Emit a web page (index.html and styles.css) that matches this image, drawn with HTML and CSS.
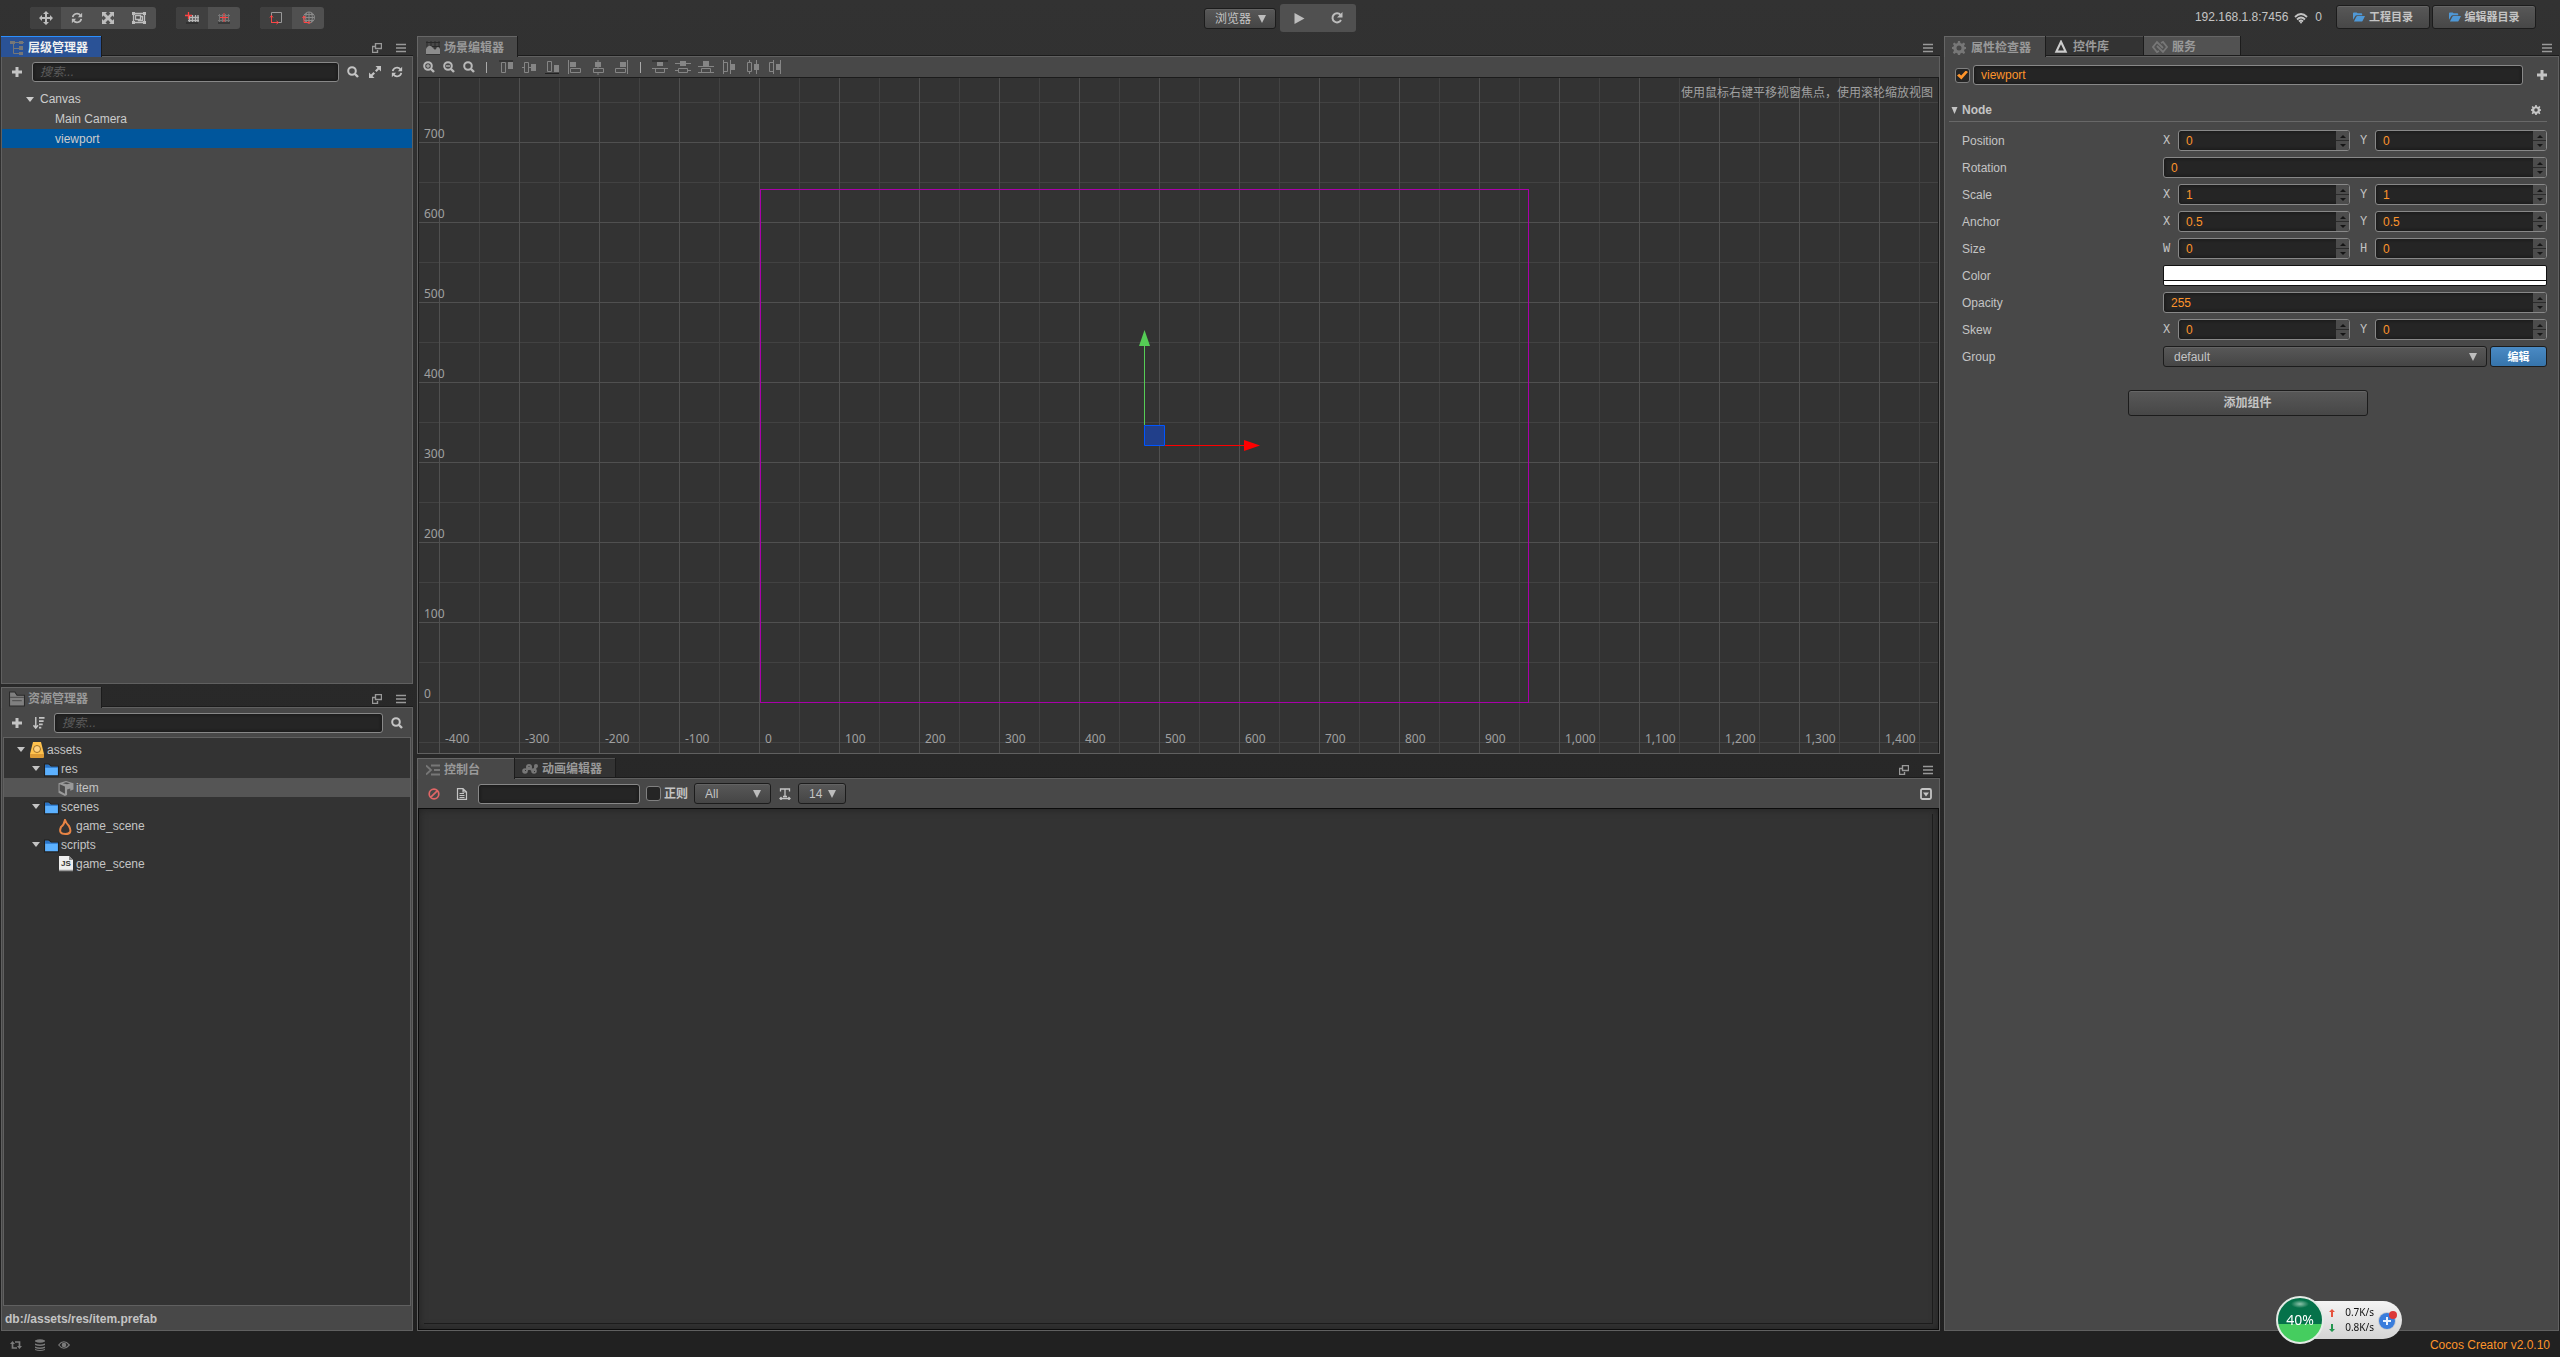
FILE: index.html
```html
<!DOCTYPE html>
<html lang="zh-CN">
<head>
<meta charset="utf-8">
<title>Cocos Creator</title>
<link rel="stylesheet" href="styles.css">
</head>
<body>
<svg class="defs" aria-hidden="true">
  <symbol id="move" viewBox="0 0 14 14"><path d="M7 0l3 3H8v3h3V4l3 3-3 3V8H8v3h2l-3 3-3-3h2V8H3v2L0 7l3-3v2h3V3H4z"/></symbol>
  <symbol id="refresh" viewBox="0 0 14 14"><path d="M2 6a5 5 0 0 1 9-2M12 8a5 5 0 0 1-9 2" fill="none" stroke="currentColor" stroke-width="2"/><path d="M13 1v5H8zM1 13V8h5z"/></symbol>
  <symbol id="scale" viewBox="0 0 14 14"><path d="M1 1h5L4.500 2.500 7 5l2.500-2.500L8 1h5v5l-1.500-1.500L9 7l2.500 2.500L13 8v5H8l1.500-1.500L7 9l-2.500 2.500L6 13H1V8l1.500 1.500L5 7 2.500 4.500 1 6z"/></symbol>
  <symbol id="rect" viewBox="0 0 16 14"><path d="M2.500 2.500h11v9h-11zM4.500 4.500h5v4h-5zM7.500 8.500v1h4v-4h-2" fill="none" stroke="currentColor" stroke-width="1.300"/><path d="M1 1h3v3H1zM12 1h3v3h-3zM1 10h3v3H1zM12 10h3v3h-3z"/></symbol>
  <symbol id="pivot" viewBox="0 0 14 12"><path d="M3 8.500h11M3 5.500h11M4.500 4v6M7.500 3v7M10.500 3v7M13 3v7" fill="none" stroke="#b5b5b5" stroke-width="1.300"/><path d="M1 11h12" stroke="#222"/><path d="M3.500 0v7M0 3.500h7" stroke="#f44" stroke-width="1.300"/></symbol>
  <symbol id="center" viewBox="0 0 14 12"><path d="M1 3.500h12M1 8.500h12M2.500 2v8M5.500 2v8M8.500 2v8M11.500 2v8" fill="none" stroke="#777"/><path d="M1 11h12" stroke="#222"/><path d="M7 1v9M3 5.500h8" stroke="#f44"/></symbol>
  <symbol id="local" viewBox="0 0 14 14"><path d="M2.500 1.500h10v10h-10z" fill="none" stroke="#999"/><path d="M2.500 5v6.500h6M1 6.500l1.500-2 1.500 2M7.500 10l2 1.500-2 1.500" fill="none" stroke="#f44"/></symbol>
  <symbol id="world" viewBox="0 0 14 14"><path d="M8 1a5.500 5.500 0 1 1 0 11A5.500 5.500 0 1 1 8 1zM8 1v11M2.500 6.500h11M3.500 3.500h9M3.500 9.500h9M5.500 2q-2 4.500 0 9M10.500 2q2 4.500 0 9" fill="none" stroke="#8a8a8a"/><path d="M3 5v6.500h5M1.500 7L3 5l1.500 2M7.500 10l1.500 1.500L7.500 13" fill="none" stroke="#f44"/></symbol>
  <symbol id="play" viewBox="0 0 10 11"><path d="M0 0l10 5.500L0 11z"/></symbol>
  <symbol id="reload" viewBox="0 0 12 12"><path d="M9.500 3A4.500 4.500 0 1 0 10 8" fill="none" stroke="currentColor" stroke-width="2"/><path d="M11.500 0v5.500H6z"/></symbol>
  <symbol id="wifi" viewBox="0 0 14 11"><path d="M1 4.500q6-6 12 0M3 7q4-4 8 0M5 9q2-2 4 0" fill="none" stroke="currentColor" stroke-width="1.800"/><circle cx="7" cy="10" r="1"/></symbol>
  <symbol id="openfolder" viewBox="0 0 13 10"><path d="M0 8V1q0-1 1-1h3l1 1h4q1 0 1 1v1H4q-1 0-1.500 1zM1 10l2.500-5q.3-1 1.500-1h8l-2.500 5q-.4 1-1.500 1z"/></symbol>
  <symbol id="tree" viewBox="0 0 14 14"><path d="M3.500 3v9.500H10M3.500 7.500H10M0 1.500h14" fill="none" stroke="currentColor"/><path d="M0 0h5v3H0zM9 0h4v3H9zM9 5h4v4H9zM9 11h4v3H9z"/></symbol>
  <symbol id="popout" viewBox="0 0 10 10"><path d="M3.500.5h6v5h-6zM3 3.500H.5v6h5V7" fill="none" stroke="currentColor" stroke-width="1.400"/></symbol>
  <symbol id="menu" viewBox="0 0 10 8"><path d="M0 .5h10M0 4h10M0 7.500h10" stroke="currentColor" stroke-width="1.300"/></symbol>
  <symbol id="plus" viewBox="0 0 10 10"><path d="M3.500 0h3v3.500H10v3H6.500V10h-3V6.500H0v-3h3.500z"/></symbol>
  <symbol id="search" viewBox="0 0 12 12"><circle cx="5" cy="5" r="3.800" fill="none" stroke="currentColor" stroke-width="2"/><path d="M8 8l3 3" stroke="currentColor" stroke-width="2.400"/></symbol>
  <symbol id="zoomin" viewBox="0 0 12 12"><use href="#search"/><path d="M3 5h4M5 3v4" stroke="currentColor"/></symbol>
  <symbol id="zoomout" viewBox="0 0 12 12"><use href="#search"/><path d="M3 5h4" stroke="currentColor" stroke-width="1.300"/></symbol>
  <symbol id="expand" viewBox="0 0 12 12"><path d="M6.500 0H12v5.500L10 3.500 7.500 6 6 4.500 8.500 2zM5.500 12H0V6.500l2 2L4.500 6 6 7.500 3.500 10z"/></symbol>
  <symbol id="sort" viewBox="0 0 12 13"><path d="M2.500 0v11M0 9l2.500 3L5 9" fill="none" stroke="currentColor" stroke-width="1.600"/><path d="M6 0h6v2H6zM6 3.500h5v2H6zM6 7h4v2H6zM6 10.500h2.500v2H6z"/></symbol>
  <symbol id="scene" viewBox="0 0 14 14"><path d="M1 0v6M5 0v6M9 0v8M13 0v10M0 1.500h14M6 5.500h8" stroke="#2a2a2a"/><path d="M0 14V8q3-6 7-1 2 3 3 1 2-4 4 0v6z" fill="#8c8c8c"/><path d="M0 13.500h14" stroke="#333"/></symbol>
  <symbol id="folder" viewBox="0 0 15 14"><path d="M.5 13.500V.500h5l2 3h7v10z" fill="#808080" stroke="#2a2a2a"/><path d="M1 5.500h13M3 8.500h9" stroke="#555"/></symbol>
  <symbol id="gear" viewBox="0 0 14 14"><path d="M6 0h2l.4 2 1.600.7L11.800 1.500l1.400 1.400L12 4.600l.6 1.400L14 6v2l-1.400.3-.6 1.500 1.200 1.700-1.400 1.400-1.800-1.200-1.600.7L8 14H6l-.4-1.600-1.600-.7-1.800 1.200L.8 11.500 2 9.800l-.6-1.500L0 8V6l1.400-.3L2 4.200.8 2.900l1.400-1.400L4 2.700 5.600 2zM7 4.500a2.500 2.500 0 1 0 0 5 2.500 2.500 0 1 0 0-5z" fill-rule="evenodd"/></symbol>
  <symbol id="widget" viewBox="0 0 12 12"><path d="M6 1.500L10 10H2z" fill="none" stroke="currentColor" stroke-width="1.800"/></symbol>
  <symbol id="service" viewBox="0 0 16 14"><path d="M7 11l-2 1-4-5 4-5 6 6M9 3l2-1 4 5-4 5-6-6" fill="none" stroke="currentColor" stroke-width="1.800"/></symbol>
  <symbol id="console" viewBox="0 0 14 11"><path d="M0 1l5 4.500L0 10M5 1h9M8 5.500h6M5 10h9" fill="none" stroke="currentColor" stroke-width="1.800"/></symbol>
  <symbol id="anim" viewBox="0 0 16 12"><path d="M3 8l4-3 5 3 2-5" fill="none" stroke="currentColor" stroke-width="2.500"/><circle cx="3" cy="8" r="2.800"/><circle cx="7" cy="4" r="3"/><circle cx="12" cy="8" r="2.800"/><circle cx="14" cy="3" r="2"/><path d="M3 7h1v1H3zM6.500 3h1v1h-1zM12 8h1v1h-1z" fill="#333"/></symbol>
  <symbol id="ban" viewBox="0 0 12 12"><path d="M6 1.200a4.800 4.800 0 1 0 0 9.600 4.800 4.800 0 1 0 0-9.600zM2.800 9.200l6.400-6.400" fill="none" stroke="currentColor" stroke-width="1.700"/></symbol>
  <symbol id="doc" viewBox="0 0 12 12"><path d="M1.500.7H7L10.500 4v7.300h-9zM7 1v3h3.500M3.500 5.500H8M3.500 7.500h5M3.500 9.500h5" fill="none" stroke="currentColor" stroke-width="1.200"/></symbol>
  <symbol id="fontsize" viewBox="0 0 12 12"><path d="M1.500 3.500V1h9v2.500M6 1v7.500M4 8.500h4M1 10.500h10M2.500 9L1 10.500 2.500 12M9.500 9l1.500 1.500L9.500 12" fill="none" stroke="currentColor" stroke-width="1.300"/></symbol>
  <symbol id="collapse" viewBox="0 0 12 12"><rect x="1" y="1" width="10" height="10" rx="1.500" fill="none" stroke="currentColor" stroke-width="1.800"/><path d="M3 4.500h6L6 8.500z"/></symbol>
  <symbol id="al1" viewBox="0 0 16 16"><path d="M1 2h14" stroke="#222"/><path d="M3.500 3.500h4v10h-4z" fill="none" stroke="currentColor"/><path d="M10 3h5v7h-5z"/></symbol>
  <symbol id="al2" viewBox="0 0 16 16"><path d="M1 8.500h14" stroke="currentColor"/><path d="M3.500 3.500h4v10h-4z" fill="#484848" stroke="currentColor"/><path d="M10 5h5v7h-5z"/></symbol>
  <symbol id="al3" viewBox="0 0 16 16"><path d="M1 14.500h14" stroke="#222"/><path d="M3.500 2.500h4v10h-4z" fill="none" stroke="currentColor"/><path d="M10 6h5v7h-5z"/></symbol>
  <symbol id="al4" viewBox="0 0 16 16"><path d="M1.500 1v14" stroke="currentColor"/><path d="M3 3h6v5H3z"/><path d="M3.500 9.500h10v4h-10z" fill="none" stroke="currentColor"/></symbol>
  <symbol id="al5" viewBox="0 0 16 16"><path d="M8 1v15" stroke="currentColor"/><path d="M5 3h6v5H5z"/><path d="M3.500 9.500h10v4h-10z" fill="#484848" stroke="currentColor"/></symbol>
  <symbol id="al6" viewBox="0 0 16 16"><path d="M14.500 1v14" stroke="currentColor"/><path d="M7 3h6v5H7z"/><path d="M2.500 9.500h10v4h-10z" fill="none" stroke="currentColor"/></symbol>
  <symbol id="di1" viewBox="0 0 16 16"><path d="M0 2h16" stroke="#222"/><path d="M0 9.500h16" stroke="currentColor"/><path d="M5 3h6v4H5z"/><path d="M3.500 9.500h9v4h-9z" fill="none" stroke="currentColor"/></symbol>
  <symbol id="di2" viewBox="0 0 16 16"><path d="M0 4.500h16M0 11.500h16" stroke="currentColor"/><path d="M5 2h6v5H5z"/><path d="M3.500 9.500h9v4h-9z" fill="#484848" stroke="currentColor"/></symbol>
  <symbol id="di3" viewBox="0 0 16 16"><path d="M0 7.500h16M0 13.500h16" stroke="currentColor"/><path d="M5 2h6v5H5z"/><path d="M3.500 9.500h9v4h-9z" fill="none" stroke="currentColor"/></symbol>
  <symbol id="di4" viewBox="0 0 16 16"><path d="M2.500 1v14M9.500 1v14" stroke="currentColor"/><path d="M2.500 3.500h4v9h-4z" fill="none" stroke="currentColor"/><path d="M10 5h4v6h-4z"/></symbol>
  <symbol id="di5" viewBox="0 0 16 16"><path d="M5.500 1v14M12.500 1v14" stroke="currentColor"/><path d="M3.500 3.500h4v9h-4z" fill="#484848" stroke="currentColor"/><path d="M10 5h5v6h-5z"/></symbol>
  <symbol id="di6" viewBox="0 0 16 16"><path d="M6.500 1v14M13.500 1v14" stroke="currentColor"/><path d="M2.500 3.500h4v9h-4z" fill="none" stroke="currentColor"/><path d="M9 5h4v6H9z"/></symbol>
  <symbol id="arrow" viewBox="0 0 8 5"><path d="M0 0h8L4 5z"/></symbol>
  <symbol id="node-arrow" viewBox="0 0 6 7"><path d="M0 0h6L3 7z"/></symbol>
  <symbol id="assets" viewBox="0 0 14 16"><path d="M3 0h8l3 12H0z" fill="#ffc24d"/><path d="M0 12h14v3q0 1-1 1H1q-1 0-1-1z" fill="#dd9b35"/><circle cx="7" cy="7" r="3.500" fill="#ffd280" stroke="#9e7027"/></symbol>
  <symbol id="bluefolder" viewBox="0 0 14 12"><path d="M.5 11.500V.500h4l2 2h7v9z" fill="#5cb1ff" stroke="#202020"/><path d="M1 1h3l2 2h7v1H1z" fill="#2873c7"/></symbol>
  <symbol id="prefab" viewBox="0 0 14 15"><path d="M0 3l7-2 7 2v6l-3 1V8L8 9v5l-2 1-6-3z" fill="#999"/><path d="M1 4l5 2v7l-5-3zM4 3l3-1 4 1-3 1z" fill="#4c4c4c"/></symbol>
  <symbol id="fire" viewBox="0 0 14 16"><path d="M6 1Q7 4 10 7q4 8-3.500 8T2 8q3-2 4-7z" fill="none" stroke="#e78445" stroke-width="2"/></symbol>
  <symbol id="jsfile" viewBox="0 0 14 16"><path d="M0 0h10l4 4v11H0z" fill="#eee"/><path d="M10 0l4 4h-4z" fill="#888"/><path d="M0 14.500h14" stroke="#999" stroke-width="1.500"/></symbol>
  <symbol id="loop" viewBox="0 0 12 10"><path d="M2.500 3v5H7M9.500 7V2H5" fill="none" stroke="currentColor" stroke-width="1.700"/><path d="M0 4l2.500-3L5 4zM7 6h5L9.500 9z"/></symbol>
  <symbol id="db" viewBox="0 0 10 12"><path d="M0 1.500Q5-1 10 1.500v1Q5 5 0 2.500zM0 4.500q5 2 10 0v1.500q-5 2-10 0zM0 7.500q5 2 10 0V9q-5 2-10 0zM0 10q5 2 10 0v1q-5 2-10 0z"/></symbol>
  <symbol id="eye" viewBox="0 0 12 8"><path d="M.7 4q5-6.500 10.600 0-5.600 6.500-10.600 0z" fill="none" stroke="currentColor" stroke-width="1.200"/><circle cx="6" cy="4" r="2.300"/></symbol>
</svg>

<header class="topbar">
  <div class="topbar-left">
    <div class="group modes">
      <button class="tool on" aria-label="Move"><svg class="i14"><use href="#move"/></svg></button>
      <button class="tool" aria-label="Rotate"><svg class="i12"><use href="#refresh"/></svg></button>
      <button class="tool" aria-label="Scale"><svg class="i14"><use href="#scale"/></svg></button>
      <button class="tool" aria-label="Rect"><svg class="i16"><use href="#rect"/></svg></button>
    </div>
    <div class="group">
      <button class="tool on" aria-label="Pivot"><svg class="i14"><use href="#pivot"/></svg></button>
      <button class="tool" aria-label="Center"><svg class="i14"><use href="#center"/></svg></button>
    </div>
    <div class="group">
      <button class="tool on" aria-label="Local"><svg class="i14"><use href="#local"/></svg></button>
      <button class="tool" aria-label="World"><svg class="i14"><use href="#world"/></svg></button>
    </div>
  </div>
  <div class="topbar-mid">
    <div class="select browser"><select aria-label="预览平台"><option>浏览器</option></select></div>
    <div class="group run">
      <button class="tool" aria-label="Play"><svg class="i11"><use href="#play"/></svg></button>
      <button class="tool" aria-label="Reload"><svg class="i12"><use href="#reload"/></svg></button>
    </div>
  </div>
  <div class="topbar-right">
    <span class="ip">192.168.1.8:7456</span><svg class="i14 wifi"><use href="#wifi"/></svg><span class="count">0</span>
    <button class="btn dir"><svg class="i12"><use href="#openfolder"/></svg>工程目录</button>
    <button class="btn dir wide"><svg class="i12"><use href="#openfolder"/></svg>编辑器目录</button>
  </div>
</header>

<main class="workspace">
  <div class="column left">
    <section class="panel">
      <div class="tabs">
        <a href="#" class="tab active focused"><svg class="i14"><use href="#tree"/></svg>层级管理器</a>
        <div class="tab-tools"><svg class="i10"><use href="#popout"/></svg><svg class="i10"><use href="#menu"/></svg></div>
      </div>
      <div class="body">
        <div class="bar">
          <button class="icon" aria-label="新建"><svg class="i10"><use href="#plus"/></svg></button>
          <input class="field" type="text" placeholder="搜索..." aria-label="搜索节点">
          <button class="icon" aria-label="搜索"><svg class="i12"><use href="#search"/></svg></button>
          <button class="icon" aria-label="展开"><svg class="i12"><use href="#expand"/></svg></button>
          <button class="icon" aria-label="刷新"><svg class="i12"><use href="#refresh"/></svg></button>
        </div>
        <ul class="nodes">
          <li class="n1"><svg class="caret"><use href="#arrow"/></svg>Canvas</li>
          <li class="n2">Main Camera</li>
          <li class="n2 selected">viewport</li>
        </ul>
      </div>
    </section>
    <section class="panel">
      <div class="tabs">
        <a href="#" class="tab active folder"><svg class="i16"><use href="#folder"/></svg>资源管理器</a>
        <div class="tab-tools"><svg class="i10"><use href="#popout"/></svg><svg class="i10"><use href="#menu"/></svg></div>
      </div>
      <div class="body">
        <div class="bar">
          <button class="icon" aria-label="新建"><svg class="i10"><use href="#plus"/></svg></button>
          <button class="icon" aria-label="排序"><svg class="i12"><use href="#sort"/></svg></button>
          <input class="field" type="text" placeholder="搜索..." aria-label="搜索资源">
          <button class="icon" aria-label="搜索"><svg class="i12"><use href="#search"/></svg></button>
        </div>
        <ul class="files">
          <li class="d0"><svg class="caret"><use href="#arrow"/></svg><svg class="i16"><use href="#assets"/></svg>assets</li>
          <li class="d1"><svg class="caret"><use href="#arrow"/></svg><svg class="i14 low"><use href="#bluefolder"/></svg>res</li>
          <li class="d2 picked"><svg class="i16"><use href="#prefab"/></svg>item</li>
          <li class="d1"><svg class="caret"><use href="#arrow"/></svg><svg class="i14 low"><use href="#bluefolder"/></svg>scenes</li>
          <li class="d2"><svg class="i16 low"><use href="#fire"/></svg>game_scene</li>
          <li class="d1"><svg class="caret"><use href="#arrow"/></svg><svg class="i14 low"><use href="#bluefolder"/></svg>scripts</li>
          <li class="d2"><span class="js"><svg class="i16"><use href="#jsfile"/></svg><b>JS</b></span>game_scene</li>
        </ul>
        <div class="path">db://assets/res/item.prefab</div>
      </div>
    </section>
  </div>

  <div class="column middle">
    <section class="panel">
      <div class="tabs">
        <a href="#" class="tab active"><svg class="i14"><use href="#scene"/></svg>场景编辑器</a>
        <div class="tab-tools"><svg class="i10"><use href="#menu"/></svg></div>
      </div>
      <div class="body">
        <div class="scene-bar">
          <button class="icon zoom" aria-label="放大"><svg class="i12"><use href="#zoomin"/></svg></button>
          <button class="icon zoom" aria-label="缩小"><svg class="i12"><use href="#zoomout"/></svg></button>
          <button class="icon zoom" aria-label="重置"><svg class="i12"><use href="#search"/></svg></button>
          <i class="sep"></i>
          <svg class="i16"><use href="#al1"/></svg><svg class="i16"><use href="#al2"/></svg><svg class="i16"><use href="#al3"/></svg><svg class="i16"><use href="#al4"/></svg><svg class="i16"><use href="#al5"/></svg><svg class="i16"><use href="#al6"/></svg>
          <i class="sep"></i>
          <svg class="i16"><use href="#di1"/></svg><svg class="i16"><use href="#di2"/></svg><svg class="i16"><use href="#di3"/></svg><svg class="i16"><use href="#di4"/></svg><svg class="i16"><use href="#di5"/></svg><svg class="i16"><use href="#di6"/></svg>
        </div>
        <div class="scene">
          <p class="hint">使用鼠标右键平移视窗焦点，使用滚轮缩放视图</p>
          <div class="axis-y"><span>700</span><span>600</span><span>500</span><span>400</span><span>300</span><span>200</span><span>100</span><span>0</span></div>
          <div class="axis-x"><span>-400</span><span>-300</span><span>-200</span><span>-100</span><span>0</span><span>100</span><span>200</span><span>300</span><span>400</span><span>500</span><span>600</span><span>700</span><span>800</span><span>900</span><span>1,000</span><span>1,100</span><span>1,200</span><span>1,300</span><span>1,400</span></div>
          <div class="design">
            <svg class="gizmo" viewBox="0 0 124 120">
              <path d="M5.500 16v79" stroke="#55cc55"/><path d="M5.500 0l5.500 16H0z" fill="#55cc55"/>
              <path d="M26 115.500h79" stroke="#f00"/><path d="M121 115.500l-16-5.500v11z" fill="#f00"/>
              <path d="M5.500 95.500h20v20h-20z" fill="#213f8a" stroke="#0055ff"/>
            </svg>
          </div>
        </div>
      </div>
    </section>
    <section class="panel">
      <div class="tabs">
        <a href="#" class="tab active console"><svg class="i14"><use href="#console"/></svg>控制台</a>
        <a href="#" class="tab idle anim"><svg class="i16"><use href="#anim"/></svg>动画编辑器</a>
        <div class="tab-tools"><svg class="i10"><use href="#popout"/></svg><svg class="i10"><use href="#menu"/></svg></div>
      </div>
      <div class="body">
        <div class="log-bar">
          <button class="icon red" aria-label="清除"><svg class="i12"><use href="#ban"/></svg></button>
          <button class="icon" aria-label="日志"><svg class="i12"><use href="#doc"/></svg></button>
          <input class="field filter" type="text" aria-label="过滤">
          <label class="regex"><input type="checkbox" class="check">正则</label>
          <div class="select level"><select aria-label="级别"><option>All</option></select></div>
          <svg class="i12"><use href="#fontsize"/></svg>
          <div class="select size"><select aria-label="字号"><option>14</option></select></div>
          <button class="icon last" aria-label="折叠"><svg class="i12"><use href="#collapse"/></svg></button>
        </div>
        <div class="log"><div class="log-view"></div></div>
      </div>
    </section>
  </div>

  <section class="panel right">
    <div class="tabs">
      <a href="#" class="tab active inspector"><svg class="i14"><use href="#gear"/></svg>属性检查器</a>
      <a href="#" class="tab idle widgets"><svg class="i14 lit"><use href="#widget"/></svg>控件库</a>
      <a href="#" class="tab service"><svg class="i16"><use href="#service"/></svg>服务</a>
      <div class="tab-tools"><svg class="i10"><use href="#menu"/></svg></div>
    </div>
    <div class="body">
      <div class="name">
        <input type="checkbox" class="check orange" checked aria-label="启用">
        <input class="field value" type="text" value="viewport" aria-label="名称">
        <button class="icon" aria-label="添加"><svg class="i10"><use href="#plus"/></svg></button>
      </div>
      <h2 class="node"><svg class="i7"><use href="#node-arrow"/></svg>Node<button class="icon" aria-label="设置"><svg class="i10"><use href="#gear"/></svg></button></h2>
      <div class="props">
        <div class="prop"><span>Position</span><div class="pair"><label for="px">X</label><div class="num"><input id="px" class="field value" value="0"><i></i></div><label for="py">Y</label><div class="num"><input id="py" class="field value" value="0"><i></i></div></div></div>
        <div class="prop"><label for="rot">Rotation</label><div class="num"><input id="rot" class="field value" value="0"><i></i></div></div>
        <div class="prop"><span>Scale</span><div class="pair"><label for="sx">X</label><div class="num"><input id="sx" class="field value" value="1"><i></i></div><label for="sy">Y</label><div class="num"><input id="sy" class="field value" value="1"><i></i></div></div></div>
        <div class="prop"><span>Anchor</span><div class="pair"><label for="ax">X</label><div class="num"><input id="ax" class="field value" value="0.5"><i></i></div><label for="ay">Y</label><div class="num"><input id="ay" class="field value" value="0.5"><i></i></div></div></div>
        <div class="prop"><span>Size</span><div class="pair"><label for="sw">W</label><div class="num"><input id="sw" class="field value" value="0"><i></i></div><label for="sh">H</label><div class="num"><input id="sh" class="field value" value="0"><i></i></div></div></div>
        <div class="prop"><span>Color</span><button class="color" aria-label="Color"></button></div>
        <div class="prop"><label for="op">Opacity</label><div class="num"><input id="op" class="field value" value="255"><i></i></div></div>
        <div class="prop"><span>Skew</span><div class="pair"><label for="kx">X</label><div class="num"><input id="kx" class="field value" value="0"><i></i></div><label for="ky">Y</label><div class="num"><input id="ky" class="field value" value="0"><i></i></div></div></div>
        <div class="prop"><label for="grp">Group</label><div class="grouping"><div class="select"><select id="grp"><option>default</option></select></div><button class="btn edit">编辑</button></div></div>
      </div>
      <button class="btn add">添加组件</button>
    </div>
  </section>
</main>

<footer class="status">
  <svg class="i12"><use href="#loop"/></svg><svg class="i12"><use href="#db"/></svg><svg class="i12"><use href="#eye"/></svg>
  <span class="version">Cocos Creator v2.0.10</span>
</footer>

<aside class="monitor">
  <div class="ball">40%</div>
  <div class="rates">
    <span><svg class="up i10" viewBox="0 0 10 10"><path d="M4 1l3 3H5v5H3V4H1z"/></svg>0.7K/s</span>
    <span><svg class="down i10" viewBox="0 0 10 10"><path d="M4 9L1 6h2V1h2v5h2z"/></svg>0.8K/s</span>
  </div>
  <svg class="boost" viewBox="0 0 20 20"><circle cx="9" cy="11" r="9" fill="#c9ccd2"/><circle cx="9" cy="11" r="8" fill="#3a7ddc"/><path d="M9 7v8M5 11h8" stroke="#e8f2ff" stroke-width="2"/><circle cx="15" cy="5" r="4" fill="#dc3838"/></svg>
</aside>
</body>
</html>
```
FILE: styles.css
```css
* { box-sizing: border-box; }
body {
  margin: 0;
  height: 100vh;
  display: flex;
  flex-direction: column;
  overflow: hidden;
  background: linear-gradient(#323232, #202020);
  color: #c4c4c4;
  font: 12px/16px "Liberation Sans", "Noto Sans CJK SC", sans-serif;
}
.defs { position: absolute; width: 0; height: 0; }
svg { fill: currentColor; flex: none; display: block; }
button, input, select { font: inherit; color: inherit; margin: 0; }
ul, p, h2 { margin: 0; padding: 0; list-style: none; }
i { font-style: normal; }
.i7 { width: 7px; height: 7px; }
.i10 { width: 10px; height: 10px; }
.i11 { width: 11px; height: 11px; }
.i12 { width: 12px; height: 12px; }
.i14 { width: 14px; height: 14px; }
.i16 { width: 16px; height: 16px; }

/* Top bar */
.topbar {
  height: 36px;
  flex: none;
  display: grid;
  grid-template-columns: 1fr auto 1fr;
}
.topbar-left { display: flex; gap: 20px; padding: 7px 0 0 30px; }
.group { display: flex; height: 22px; border-radius: 3px; overflow: hidden; background: #505050; }
.tool {
  width: 32px;
  padding: 0;
  border: 0;
  background: none;
  display: grid;
  place-items: center;
  color: #bdbdbd;
}
.tool.on { background: #404040; }
.modes .tool { width: 31px; }
.modes { padding-right: 2px; }
.topbar-mid { display: flex; gap: 4px; padding-top: 4px; }
.browser { width: 72px; margin-top: 4px; }
.run { height: 28px; }
.run .tool { width: 38px; }
.topbar-right { display: flex; justify-content: flex-end; padding: 5px 24px 0 0; line-height: 24px; }
.wifi { margin: 6px 7px 0 6px; }
.count { margin-right: 12px; }
.btn {
  border: 1px solid #1c1c1c;
  border-radius: 3px;
  background: linear-gradient(#585858, #474747);
  box-shadow: inset 0 1px #666;
  padding: 0;
  font-weight: bold;
  font-size: 11px;
}
.dir { display: flex; align-items: center; justify-content: center; gap: 4px; width: 94px; height: 24px; margin-left: 2px; }
.dir.wide { width: 104px; }
.dir svg { color: #4f98d6; }

/* Drop-downs and fields */
.select { position: relative; height: 21px; }
.select select {
  appearance: none;
  display: block;
  width: 100%;
  height: 21px;
  padding: 0 10px;
  border: 1px solid #1c1c1c;
  border-radius: 3px;
  background: linear-gradient(#585858, #454545);
  box-shadow: inset 0 1px #636363;
}
.select::after {
  content: "";
  position: absolute;
  top: 7px;
  right: 10px;
  width: 8px;
  height: 8px;
  background: #bdbdbd;
  clip-path: polygon(0 0, 100% 0, 50% 100%);
  pointer-events: none;
}
.field {
  min-width: 0;
  height: 20px;
  padding: 0 7px;
  border: 1px solid #888;
  border-radius: 3px;
  background: #252525;
  box-shadow: inset 0 0 3px 1px #1a1a1a;
}
.field::placeholder { color: #5c5c5c; font-style: italic; opacity: 1; }
.value { color: #fd942b; }
.icon { border: 0; padding: 0; background: none; width: 22px; height: 20px; display: grid; place-items: center; flex: none; }
.check {
  appearance: none;
  width: 15px;
  height: 15px;
  border: 1px solid #808080;
  border-radius: 3px;
  background: #252525;
  display: grid;
  place-items: center;
}
.check.orange:checked::before {
  content: "";
  width: 11px;
  height: 9px;
  background: #fd942b;
  clip-path: polygon(0 55%, 20% 35%, 38% 55%, 80% 0, 100% 18%, 40% 100%);
}

/* Panels */
.workspace {
  flex: 1;
  min-height: 0;
  display: grid;
  grid-template-columns: minmax(0, 412fr) minmax(0, 1523fr) minmax(0, 615fr);
  grid-template-rows: minmax(0, 1fr);
  gap: 4px;
  padding: 0 1px;
}
.column { display: grid; }
.left { grid-template-rows: minmax(0, 648fr) minmax(0, 644fr); gap: 3px; }
.middle { grid-template-rows: minmax(0, 718fr) minmax(0, 573fr); gap: 4px; }
.panel { display: flex; flex-direction: column; min-width: 0; min-height: 0; }
.tabs { display: flex; height: 20px; flex: none; box-shadow: inset 0 -1px #1c1c1c; }
.tab {
  display: flex;
  align-items: center;
  gap: 4px;
  width: 101px;
  padding: 2px 0 0 9px;
  border: 1px solid #1c1c1c;
  border-width: 0 1px 1px 0;
  box-shadow: inset 0 1px #666;
  color: #999;
  font-weight: bold;
  text-decoration: none;
  white-space: nowrap;
}
.tab svg { color: #777; }
.tab.active { height: 21px; border-bottom: 0; background: #484848; box-shadow: inset 1px 1px #666; position: relative; z-index: 1; }
.tab.focused { background: #2a5296; box-shadow: inset 0 1px #2b8fff; color: #f0f0f0; }
.tab.idle { background: #333; box-shadow: inset 0 1px #505050; }
.tab.folder { padding-left: 8px; gap: 3px; }
.tab.console { width: 98px; }
.tab.anim { padding-left: 7px; }
.tab.inspector { width: 102px; padding-left: 8px; gap: 5px; }
.tab.widgets { width: 98px; padding-left: 8px; gap: 5px; }
.tab.service { width: 97px; background: #525252; padding-left: 8px; }
.tab .lit { color: #ccc; }
.tab-tools { margin-left: auto; display: flex; align-items: center; gap: 14px; padding: 4px 7px 0 0; color: #999; }
.body {
  flex: 1;
  min-height: 0;
  display: flex;
  flex-direction: column;
  border: 1px solid #606060;
  background: #484848;
}
.bar { display: flex; align-items: center; height: 29px; padding: 0 4px; flex: none; }
.bar .field { flex: 1; margin: 0 3px 0 4px; }

/* Node tree */
.nodes { padding-top: 3px; line-height: 20px; color: #ccc; }
.nodes li { display: flex; align-items: center; height: 20px; }
.caret { width: 8px; height: 5px; }
.n1 { padding-left: 24px; gap: 6px; }
.n2 { padding-left: 53px; }
.nodes .selected { background: #00569c; height: 19px; }

/* Assets */
.files { flex: 1; min-height: 0; border: 1px solid #606060; padding-top: 2px; background: #333; margin: 0 1px; }
.files li { display: flex; align-items: center; height: 19px; }
.files .caret { margin-right: 4px; }
.files .i14, .files .i16 { margin-right: 2px; }
.files .low { margin-top: 3px; }
.d0 { padding-left: 13px; }
.d1 { padding-left: 28px; }
.files .d2 { padding-left: 54px; }
.d1 .i14 { width: 15px; }
.picked { background: #555; }
.js { position: relative; }
.js b { position: absolute; left: 3px; top: 4px; font-size: 8px; line-height: 8px; color: #333; }
.path { height: 24px; padding-left: 3px; line-height: 26px; font-weight: bold; flex: none; }

/* Scene */
.scene-bar { display: flex; align-items: center; height: 20px; flex: none; padding-left: 1px; gap: 7px; color: #858585; }
.icon.zoom { width: 20px; margin-right: -7px; color: #b8b8b8; }
.sep { width: 1px; height: 11px; background: #aaa; margin: 0 4px; }
.icon + .sep { margin: 0 4px 0 14px; }
.scene {
  position: relative;
  flex: 1;
  overflow: hidden;
  border: 1px solid #1c1c1c;
  border-width: 1px 1px 0;
  background-color: #333;
  background-image:
    linear-gradient(to right, #505050 1px, transparent 1px),
    linear-gradient(to top, #505050 1px, transparent 1px),
    linear-gradient(to right, #424242 1px, transparent 1px),
    linear-gradient(to top, #424242 1px, transparent 1px);
  background-size: 80px 80px, 80px 80px, 40px 40px, 40px 40px;
  background-position: 20px 0, 0 calc(100% - 50px), 20px 0, 0 calc(100% - 50px);
  font-family: "Noto Sans", "Noto Sans CJK SC", sans-serif;
  color: #a0a0a0;
}
.hint { position: absolute; top: 7px; right: 5px; }
.axis-y { position: absolute; left: 5px; bottom: 51px; }
.axis-y span { display: flex; align-items: flex-end; height: 80px; }
.axis-x { position: absolute; left: 20px; right: 0; bottom: 6px; display: flex; overflow: hidden; }
.axis-x span { flex: none; width: 80px; padding-left: 6px; }
.design { position: absolute; left: 341px; bottom: 50px; width: 769px; height: 514px; border: 1px solid #a0a; }
.gizmo { position: absolute; left: 378px; top: 140px; width: 124px; height: 120px; overflow: visible; }

/* Console */
.log-bar { display: flex; align-items: center; height: 29px; flex: none; padding: 0 7px 0 5px; }
.log-bar .icon { margin-right: 6px; }
.log-bar .last { margin: 0 0 0 auto; width: 12px; }
.log-bar .red { color: #e06666; }
.filter { width: 162px; margin: 0 6px 0 -1px; }
.regex { display: flex; align-items: center; gap: 3px; margin-right: 6px; font-weight: bold; }
.level { width: 77px; margin-right: 8px; }
.size { width: 48px; margin-left: 7px; }
.log { flex: 1; display: flex; padding: 5px; border: 1px solid #0c0c0c; background: #333; box-shadow: inset 0 0 8px #222; }
.log-view { flex: 1; border: 1px solid #1c1c1c; border-width: 0 1px 1px 0; }

/* Inspector */
.name { display: flex; align-items: center; padding: 8px 5px 0 10px; }
.name .field { flex: 1; margin: 0 8px 0 3px; }
.node { display: flex; align-items: center; height: 22px; margin: 14px 11px 0 4px; padding: 0 0 0 2px; gap: 4px; border-bottom: 1px solid #686868; font-size: 12px; box-sizing: content-box; }
.node .icon { margin-left: auto; }
.props { display: grid; gap: 6px; padding: 8px 11px 0 17px; }
.prop { display: grid; grid-template-columns: minmax(0, 201fr) minmax(0, 384fr); align-items: center; height: 21px; }
.pair { display: grid; grid-template-columns: 15px 1fr 25px 1fr; align-items: center; }
.pair label { font-family: "Liberation Mono", monospace; line-height: 18px; }
.pair .num + label { padding-left: 10px; }
.num { display: flex; position: relative; min-width: 0; }
.num .field { width: 100%; height: 21px; }
.num i {
  position: absolute;
  inset: 1px 1px 1px auto;
  width: 13px;
  border-radius: 0 2px 2px 0;
  background: linear-gradient(#2b2b2b, #2b2b2b) 0 9px / 100% 1px no-repeat #4c4c4c;
}
.num i::before, .num i::after { content: ""; position: absolute; left: 4px; width: 6px; height: 3px; background: #151515; }
.num i::before { top: 4px; clip-path: polygon(50% 0, 100% 100%, 0 100%); }
.num i::after { bottom: 3px; clip-path: polygon(0 0, 100% 0, 50% 100%); }
.color { width: 100%; height: 21px; padding: 0; border: 1px solid #111; border-radius: 2px; background: linear-gradient(#111, #111) 0 14px / 100% 1px no-repeat #fff; }
.grouping { display: grid; grid-template-columns: minmax(0, 1fr) 57px; gap: 3px; }
.edit { background: linear-gradient(#4a8ac4, #3674ab); box-shadow: none; color: #fff; }
.add { align-self: center; width: 240px; height: 26px; margin: 23px 8px 0 0; font-size: 12px; }

/* Status bar and network monitor */
.status { height: 26px; flex: none; display: flex; align-items: center; gap: 12px; padding: 2px 10px 0; background: #212121; color: #7a7a7a; }
.version { margin-left: auto; color: #fd942b; }
.monitor {
  position: fixed;
  right: 158px;
  bottom: 18px;
  width: 124px;
  height: 38px;
  padding: 0 4px 0 50px;
  display: flex;
  align-items: center;
  gap: 4px;
  border-radius: 19px;
  background: linear-gradient(#f4f4f4, #d4d4d4);
  font-family: "Noto Sans", sans-serif;
  color: #111;
}
.ball {
  position: absolute;
  left: -2px;
  top: -5px;
  width: 48px;
  height: 48px;
  border: 2px solid #e4ebe6;
  border-radius: 50%;
  background: radial-gradient(ellipse 9px 4px at 50% 6px, #8fc3ab, transparent), linear-gradient(#05724a 60%, #45cd5f 60%);
  color: #fff;
  font-size: 14px;
  line-height: 44px;
  text-align: center;
}
.rates { flex: 1; font-size: 10px; line-height: 15px; }
.rates span { display: flex; align-items: center; justify-content: space-between; }
.up { color: #e5533d; }
.down { color: #23964f; }
.boost { width: 20px; height: 20px; }
.icon.zoom + .sep { margin-left: 7px; }
```
